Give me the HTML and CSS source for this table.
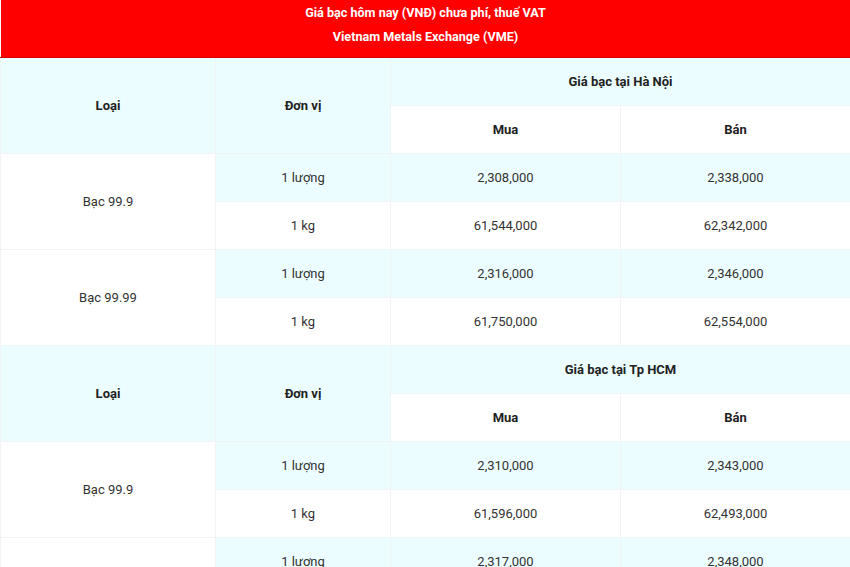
FILE: index.html
```html
<!DOCTYPE html>
<html lang="vi">
<head>
<meta charset="utf-8">
<title>Giá bạc hôm nay</title>
<link rel="stylesheet" href="styles.css">
</head>
<body>
<table class="price-table">
  <colgroup>
    <col class="c-type">
    <col class="c-unit">
    <col class="c-buy">
    <col class="c-sell">
  </colgroup>
  <tbody>
    <tr class="title-row">
      <th colspan="4" class="title">Giá bạc hôm nay (VNĐ) chưa phí, thuế VAT<br>Vietnam Metals Exchange (VME)</th>
    </tr>
    <tr class="head-row">
      <th rowspan="2" class="tint">Loại</th>
      <th rowspan="2" class="tint">Đơn vị</th>
      <th colspan="2" class="tint">Giá bạc tại Hà Nội</th>
    </tr>
    <tr class="sub-row">
      <th class="plain">Mua</th>
      <th class="plain">Bán</th>
    </tr>
    <tr class="tint-row">
      <td rowspan="2" class="plain">Bạc 99.9</td>
      <td>1 lượng</td>
      <td>2,308,000</td>
      <td>2,338,000</td>
    </tr>
    <tr class="plain-row">
      <td>1 kg</td>
      <td>61,544,000</td>
      <td>62,342,000</td>
    </tr>
    <tr class="tint-row">
      <td rowspan="2" class="plain">Bạc 99.99</td>
      <td>1 lượng</td>
      <td>2,316,000</td>
      <td>2,346,000</td>
    </tr>
    <tr class="plain-row">
      <td>1 kg</td>
      <td>61,750,000</td>
      <td>62,554,000</td>
    </tr>
    <tr class="head-row">
      <th rowspan="2" class="tint">Loại</th>
      <th rowspan="2" class="tint">Đơn vị</th>
      <th colspan="2" class="tint">Giá bạc tại Tp HCM</th>
    </tr>
    <tr class="sub-row">
      <th class="plain">Mua</th>
      <th class="plain">Bán</th>
    </tr>
    <tr class="tint-row">
      <td rowspan="2" class="plain">Bạc 99.9</td>
      <td>1 lượng</td>
      <td>2,310,000</td>
      <td>2,343,000</td>
    </tr>
    <tr class="plain-row">
      <td>1 kg</td>
      <td>61,596,000</td>
      <td>62,493,000</td>
    </tr>
    <tr class="tint-row">
      <td rowspan="2" class="plain">Bạc 99.99</td>
      <td>1 lượng</td>
      <td>2,317,000</td>
      <td>2,348,000</td>
    </tr>
    <tr class="plain-row">
      <td>1 kg</td>
      <td></td>
      <td></td>
    </tr>
  </tbody>
</table>
</body>
</html>
```
FILE: styles.css
```css
html, body {
  margin: 0;
  padding: 0;
  background: #ffffff;
}

body {
  font-family: Roboto, "Liberation Sans", Arial, sans-serif;
  font-size: 13px;
  color: #333333;
}

.price-table {
  width: 850px;
  border-collapse: collapse;
  table-layout: fixed;
}

.c-type { width: 215px; }
.c-unit { width: 175px; }
.c-buy { width: 230px; }
.c-sell { width: 230px; }

.price-table th,
.price-table td {
  border: 1px solid #f1f4f4;
  padding: 0;
  text-align: center;
  vertical-align: middle;
  line-height: 18px;
}

.price-table th {
  font-weight: 700;
  color: #222222;
}

.title-row th.title {
  background: #fe0000;
  color: #ffffff;
  font-weight: 700;
  font-size: 12.6px;
  line-height: 24px;
  padding: 1px 0 8px;
  border: none;
  border-bottom: 1px solid #d40000;
  height: 48px;
}

.head-row,
.sub-row,
.tint-row,
.plain-row {
  height: 48px;
}

.tint,
.tint-row td {
  background: #ebfdfe;
}

.plain,
.plain-row td,
.tint-row td.plain {
  background: #ffffff;
}
```
